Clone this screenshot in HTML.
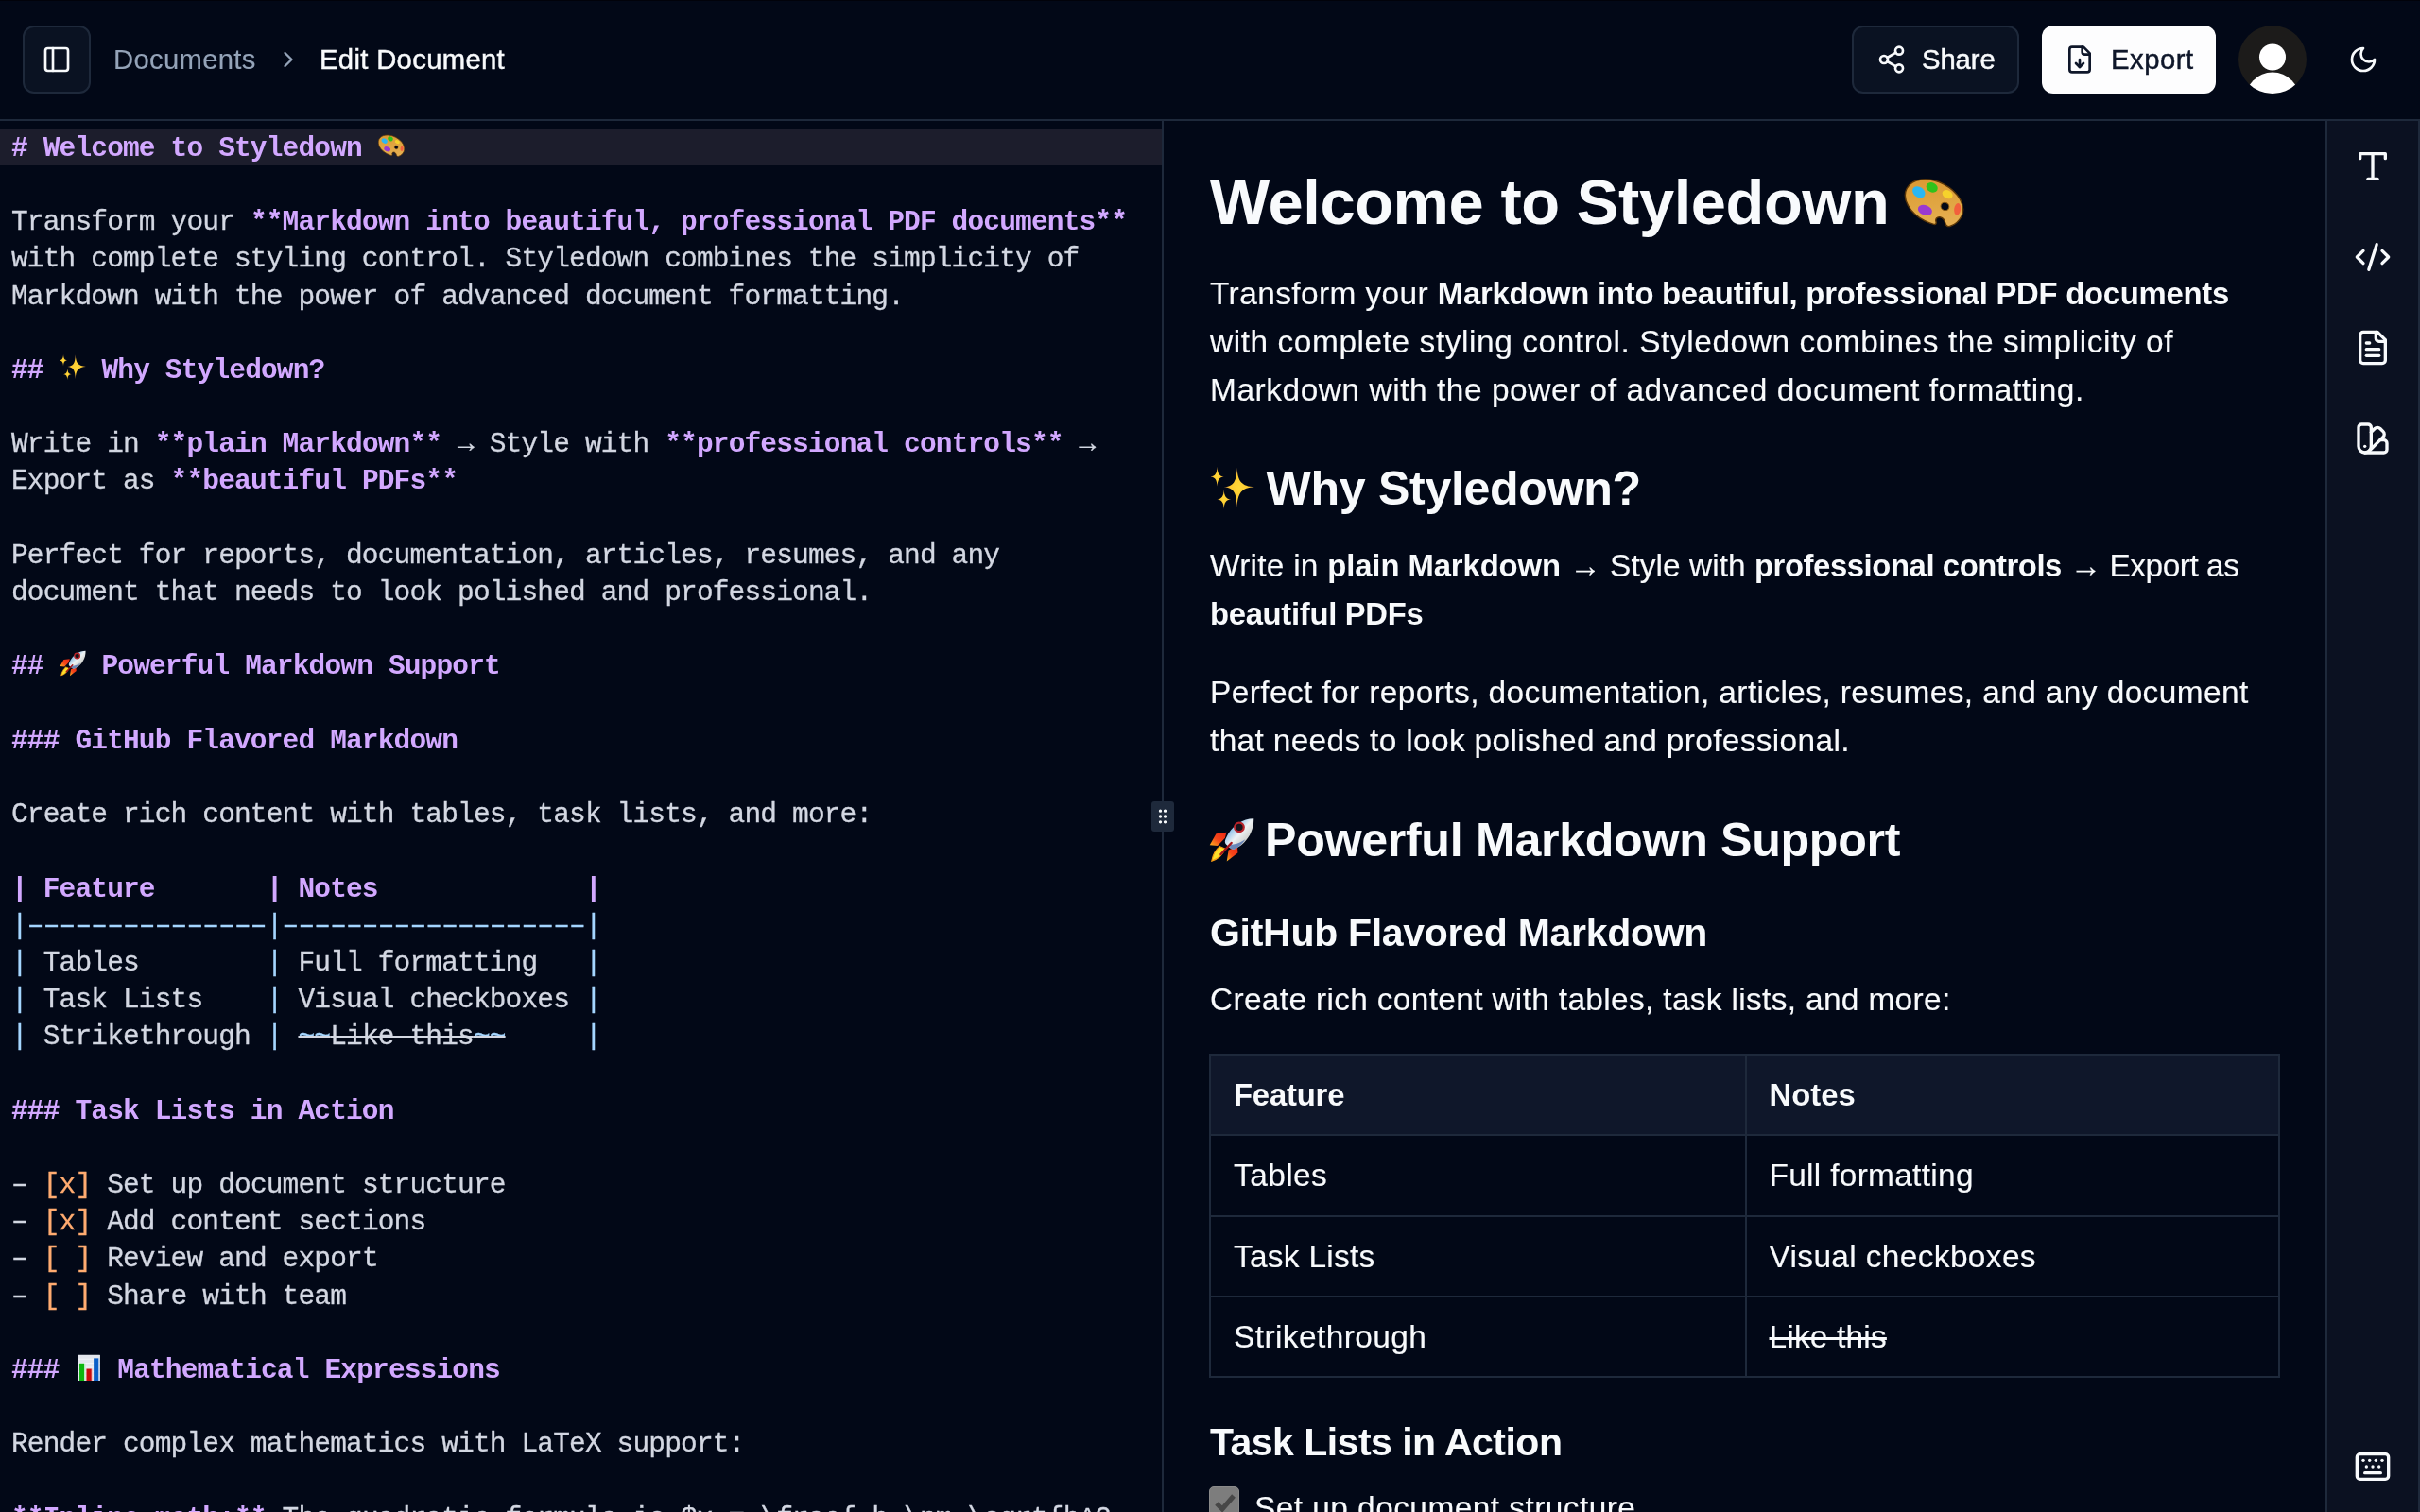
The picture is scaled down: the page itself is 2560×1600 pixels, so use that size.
<!DOCTYPE html>
<html lang="en">
<head>
<meta charset="utf-8">
<title>Edit Document</title>
<style>
*{box-sizing:border-box;margin:0;padding:0}
html,body{width:2560px;height:1600px;overflow:hidden;background:#020817}
body{position:relative;font-family:"Liberation Sans",sans-serif;color:#f8fafc}
svg{display:block}
.ic{fill:none;stroke:currentColor;stroke-width:2;stroke-linecap:round;stroke-linejoin:round}
.f{white-space:pre}
#hdr,#ed,#pv{will-change:transform}
/* header */
#hdr{position:absolute;left:0;top:0;width:2560px;height:128px;border-bottom:2px solid #1e293b;background:#020817;box-shadow:inset 0 1px 0 #01020a}
.btn{position:absolute;top:27px;height:72px;border-radius:12px}
#tog{left:24px;width:72px;border:2px solid #1e293b;background:#0a1222}
#tog svg{position:absolute;left:18px;top:18px}
.crumb{position:absolute;top:43px;height:40px;line-height:40px;white-space:nowrap}
#c1{left:120px;color:#94a3b8}
#c2{left:338px;color:#f8fafc}
#chev{position:absolute;left:291px;top:49px;color:#94a3b8}
#share{left:1959px;width:177px;border:2px solid #1e293b;background:#0a1222}
#share svg{position:absolute;left:24px;top:18px}
#share .t{position:absolute;left:72px;top:14px;line-height:40px;white-space:nowrap}
#export{left:2160px;width:184px;background:#fdfdfe;color:#0f172a}
#export svg{position:absolute;left:24px;top:20px}
#export .t{position:absolute;left:73px;top:16px;line-height:40px;white-space:nowrap}
#avatar{position:absolute;left:2368px;top:27px;width:72px;height:72px;border-radius:50%;background:#1c1b1a;overflow:hidden}
#moon{position:absolute;left:2484px;top:47px;color:#f8fafc}
/* sidebar */
#sb{position:absolute;left:2460px;top:128px;width:100px;height:1472px;background:#0b1121;border-left:2px solid #1e293b;border-right:2px solid #1e293b}
#sb svg{position:absolute;left:28px;color:#f8fafc}
/* divider */
#div{position:absolute;left:1229px;top:128px;width:2px;height:1472px;background:#1e293b}
#grip{position:absolute;left:1218px;top:848px;width:24px;height:32px;border-radius:3px;background:#1e293b}
#grip svg{position:absolute;left:2px;top:6px}
/* editor */
#ed{position:absolute;left:0;top:128px;width:1229px;height:1472px;overflow:hidden;padding-top:8px;font-family:"Liberation Mono",monospace;font-size:29.5px;letter-spacing:-0.845px;color:#d3d7e2;-webkit-text-stroke:0.3px #d3d7e2}
.l{height:39.2px;line-height:39.2px;padding-left:12px;white-space:pre;position:relative}
.l.act{background:#1c1d2c}
#ed .l{padding-top:1.8px}
.h,.s{color:#d2a8ff;font-weight:700;-webkit-text-stroke:0}
.m{color:#a5d6ff;-webkit-text-stroke:0.3px #a5d6ff}
.a{color:#ffab70;-webkit-text-stroke:0.3px #ffab70}
.st{text-decoration:line-through;text-decoration-thickness:2px}
.ee{display:inline-block;width:28px;height:28px;vertical-align:-3px;letter-spacing:0}
/* preview */
#pv{position:absolute;left:1231px;top:128px;width:1229px;height:1472px;overflow:hidden;color:#f8fafc}
#pv>div{position:absolute;left:49px;white-space:pre}
#pv>#tbl,#pv>#cb{left:48px}
.rg{-webkit-text-stroke:0.15px currentColor}
.md{-webkit-text-stroke:0.45px currentColor}
.h1{height:76.8px;line-height:76.8px}
.h2{height:62.4px;line-height:62.4px}
.h3{height:52px;line-height:52px}
.p{height:51.2px;line-height:51.2px}
#tbl{width:1133px;border:2px solid #1e293b;border-bottom:0}
.tr{display:flex;height:85.2px;border-bottom:2px solid #1e293b}
.tr.th{background:#0f172a}
.td{width:50%;padding:16px 24px;line-height:51.2px;height:83.2px}
.td+.td{border-left:2px solid #1e293b}
.strike{text-decoration:line-through;text-decoration-thickness:3px}
#cb{top:1445px;width:32px;height:32px;border-radius:5px;background:#7d7d7d;border:1px solid #8a8a8a}
.em{position:absolute}
</style>
<script>(function(){var w=window.innerWidth||2560;if(w>0&&Math.abs(w-2560)>8){document.documentElement.style.zoom=w/2560;}})();</script>
</head>
<body>
<svg width="0" height="0" style="position:absolute">
<defs>
<radialGradient id="g-star" cx="50%" cy="50%" r="50%"><stop offset="0" stop-color="#ffd83a"/><stop offset=".6" stop-color="#fdc92f"/><stop offset="1" stop-color="#f4a75c"/></radialGradient>
<linearGradient id="g-wood" x1="0" y1="0" x2="1" y2="1"><stop offset="0" stop-color="#d9952f"/><stop offset=".5" stop-color="#e0a541"/><stop offset="1" stop-color="#e8b45a"/></linearGradient>
<linearGradient id="g-rb" x1="0" y1="0" x2="1" y2="1"><stop offset="0" stop-color="#4f97d8"/><stop offset=".28" stop-color="#8fc0e6"/><stop offset=".5" stop-color="#eef2f4"/><stop offset="1" stop-color="#a9a79c"/></linearGradient>
<linearGradient id="g-fl" x1="1" y1="0" x2="0" y2="1"><stop offset="0" stop-color="#ee2712"/><stop offset=".55" stop-color="#f5471a"/><stop offset="1" stop-color="#ffb81f"/></linearGradient>
<symbol id="e-pal" viewBox="0 0 64 64" overflow="visible">
 <g transform="rotate(27 32 32)">
  <path d="M32 9.5C13.5 9.5-1.5 19.5-1.5 32S13.5 54.5 32 54.5c4 0 7.5-.4 10.5-1.1 2.2-.5 2.2-2.3 .9-3.6-2.1-2.1-1.5-5.2 1.4-6.3 3.1-1.2 6.2 .7 8.600000000000001 3.4 1.6 1.8 3.9 2.2 5.7 .5C63.3 43.4 65.5 38 65.5 32c0-12.5-15-22.5-33.5-22.5Z" fill="url(#g-wood)" stroke="#5a3608" stroke-width="1.5"/>
  <ellipse cx="44.5" cy="30.5" rx="4.6" ry="4.2" fill="#020817" stroke="#8a5a14" stroke-width="1"/>
  <ellipse cx="12" cy="29.5" rx="7.5" ry="5.6" fill="#2bb7f3" transform="rotate(8 12 29.5)"/>
  <ellipse cx="22.5" cy="18.5" rx="6.5" ry="5.2" fill="#2fc21b"/>
  <ellipse cx="41" cy="17.500000000000004" rx="6" ry="4.3" fill="#f6d22c"/>
  <ellipse cx="58" cy="27" rx="3.6" ry="6.5" fill="#f2603c" transform="rotate(-20 58 27)"/>
  <ellipse cx="27" cy="44" rx="8" ry="5.5" fill="#9a39d0" transform="rotate(-6 27 44)"/>
 </g>
</symbol>
<symbol id="e-spk" viewBox="0 0 64 64" overflow="visible">
 <path d="M38.4 0.6C39.2 21.8 45.6 28.7 64.9 29.6C45.6 30.5 39.2 37.8 38.4 60.1C37.8 37.8 33.1 30.5 18.9 29.6C33.1 28.7 37.8 21.8 38.4 0.6Z" fill="url(#g-star)"/>
 <path d="M9.2 -0.5C9.6 10.0 12.2 13.9 19.2 14.5C12.2 15.1 9.6 18.9 9.2 29.0C8.8 18.9 6.2 15.1 -0.8 14.5C6.2 13.9 8.8 10.0 9.2 -0.5Z" fill="url(#g-star)"/>
 <path d="M19.1 33.5C19.5 43.6 22.2 47.4 29.3 48.0C22.2 48.6 19.5 52.4 19.1 62.5C18.7 52.4 16.0 48.6 8.9 48.0C16.0 47.4 18.7 43.6 19.1 33.5Z" fill="url(#g-star)"/>
</symbol>
<symbol id="e-rkt" viewBox="0 0 64 64">
 <path d="M1 39 10 23l14.5-2-2 8L12 40Z" fill="url(#g-fl)"/>
 <path d="M25 62 27.500000000000004 46l12.5-5.5.5 9.5Z" fill="url(#g-fl)"/>
 <path d="M3.8 61.5C5.5 52 9.5 45.5 15 41l7.5 3C19.5 52 13 58.5 3.8 61.5Z" fill="#fde02a" stroke="#f59a14" stroke-width="1.6"/>
 <path d="M63 1.5C48 1.5 31.5 11 23.5 30c-1.5 3.5-1.5 6 .5 8.000000000000002l5.5 5c2.500000000000001 2 5 2.500000000000001 8.000000000000002 1C54 36 63.500000000000014 19 63 1.5Z" fill="url(#g-rb)"/>
 <path d="M29.5 43c2.500000000000001 2 5 2.500000000000001 8.000000000000002 1C43.5 40.5 48 36 51 31 45 35.5 38 38 29.5 38.5Z" fill="#4d6fae" opacity=".8"/>
 <circle cx="42.6" cy="13.8" r="6.4" fill="#15131c" stroke="#b8232a" stroke-width="3"/>
 <path d="M31.5 36 16.5 52" stroke="#a8141a" stroke-width="3.2" stroke-linecap="round"/>
</symbol>
<symbol id="e-bar" viewBox="0 0 64 64" overflow="visible">
 <rect x="8.2" y="1.5" width="53.4" height="62.9" rx="1" fill="#e4e7ee"/>
 <path d="M8.2 12h53M8.2 22h53M8.2 32h53M8.2 42h53M8.2 52h53" stroke="#f4f6fa" stroke-width="2"/>
 <rect x="11.5" y="22.3" width="11.4" height="42.1" fill="#0db70f"/><rect x="22.9" y="22.3" width="3" height="42.1" fill="#b7ecbf"/>
 <rect x="28.5" y="35.5" width="12.3" height="28.9" fill="#cb0b0b"/><rect x="40.8" y="35.5" width="3" height="28.9" fill="#f0c4c4"/>
 <rect x="46" y="10" width="11.4" height="54.4" fill="#0b5fc8"/><rect x="57.4" y="10" width="3" height="54.4" fill="#9dbce6"/>
</symbol>
</defs>
</svg>
<div id="hdr">
  <div class="btn" id="tog"><svg class="ic" width="32" height="32" viewBox="0 0 24 24"><rect width="18" height="18" x="3" y="3" rx="2"/><path d="M9 3v18"/></svg></div>
  <div class="crumb" id="c1"><span class="f rg" style="font-size:29.26px;letter-spacing:0.297px;">Documents</span></div>
  <svg id="chev" class="ic" width="28" height="28" viewBox="0 0 24 24"><path d="m9 18 6-6-6-6"/></svg>
  <div class="crumb" id="c2"><span class="f md" style="font-size:29.26px;font-weight:400;letter-spacing:0.325px;">Edit Document</span></div>
  <div class="btn" id="share"><svg class="ic" width="32" height="32" viewBox="0 0 24 24"><circle cx="18" cy="5" r="3"/><circle cx="6" cy="12" r="3"/><circle cx="18" cy="19" r="3"/><line x1="8.59" x2="15.42" y1="13.51" y2="17.49"/><line x1="15.41" x2="8.59" y1="6.51" y2="10.49"/></svg><span class="t"><span class="f md" style="font-size:29.26px;font-weight:400;letter-spacing:-0.097px;">Share</span></span></div>
  <div class="btn" id="export"><svg class="ic" width="32" height="32" viewBox="0 0 24 24"><path d="M15 2H6a2 2 0 0 0-2 2v16a2 2 0 0 0 2 2h12a2 2 0 0 0 2-2V7Z"/><path d="M14 2v4a2 2 0 0 0 2 2h4"/><path d="M12 18v-6"/><path d="m9 15 3 3 3-3"/></svg><span class="t"><span class="f md" style="font-size:29.26px;font-weight:400;letter-spacing:0.500px;">Export</span></span></div>
  <div id="avatar"><svg width="72" height="72" viewBox="0 0 72 72"><circle cx="36" cy="33.5" r="14" fill="#fff"/><ellipse cx="36" cy="79" rx="29" ry="29.5" fill="#fff"/></svg></div>
  <svg id="moon" class="ic" width="32" height="32" viewBox="0 0 24 24"><path d="M12 3a6 6 0 0 0 9 9 9 9 0 1 1-9-9Z"/></svg>
</div>

<div id="ed">
<div class="l act"><span class="h"># Welcome to Styledown </span><span class="ee"><svg width="28" height="28" viewBox="0 0 64 64"><use href="#e-pal"/></svg></span></div>
<div class="l">&nbsp;</div>
<div class="l">Transform your <span class="s">**Markdown into beautiful, professional PDF documents**</span></div>
<div class="l">with complete styling control. Styledown combines the simplicity of</div>
<div class="l">Markdown with the power of advanced document formatting.</div>
<div class="l">&nbsp;</div>
<div class="l"><span class="h">## </span><span class="ee"><svg width="28" height="28" viewBox="0 0 64 64"><use href="#e-spk"/></svg></span><span class="h"> Why Styledown?</span></div>
<div class="l">&nbsp;</div>
<div class="l">Write in <span class="s">**plain Markdown**</span> → Style with <span class="s">**professional controls**</span> →</div>
<div class="l">Export as <span class="s">**beautiful PDFs**</span></div>
<div class="l">&nbsp;</div>
<div class="l">Perfect for reports, documentation, articles, resumes, and any</div>
<div class="l">document that needs to look polished and professional.</div>
<div class="l">&nbsp;</div>
<div class="l"><span class="h">## </span><span class="ee"><svg width="28" height="28" viewBox="0 0 64 64"><use href="#e-rkt"/></svg></span><span class="h"> Powerful Markdown Support</span></div>
<div class="l">&nbsp;</div>
<div class="l"><span class="h">### GitHub Flavored Markdown</span></div>
<div class="l">&nbsp;</div>
<div class="l">Create rich content with tables, task lists, and more:</div>
<div class="l">&nbsp;</div>
<div class="l"><span class="h">| Feature       | Notes             |</span></div>
<div class="l"><span class="m">|–––––––––––––––|–––––––––––––––––––|</span></div>
<div class="l"><span class="m">|</span> Tables        <span class="m">|</span> Full formatting   <span class="m">|</span></div>
<div class="l"><span class="m">|</span> Task Lists    <span class="m">|</span> Visual checkboxes <span class="m">|</span></div>
<div class="l"><span class="m">|</span> Strikethrough <span class="m">|</span> <span class="st"><span class="m">~~</span>Like this<span class="m">~~</span></span>     <span class="m">|</span></div>
<div class="l">&nbsp;</div>
<div class="l"><span class="h">### Task Lists in Action</span></div>
<div class="l">&nbsp;</div>
<div class="l">– <span class="a">[x]</span> Set up document structure</div>
<div class="l">– <span class="a">[x]</span> Add content sections</div>
<div class="l">– <span class="a">[ ]</span> Review and export</div>
<div class="l">– <span class="a">[ ]</span> Share with team</div>
<div class="l">&nbsp;</div>
<div class="l"><span class="h">### </span><span class="ee"><svg width="28" height="28" viewBox="0 0 64 64"><use href="#e-bar"/></svg></span><span class="h"> Mathematical Expressions</span></div>
<div class="l">&nbsp;</div>
<div class="l">Render complex mathematics with LaTeX support:</div>
<div class="l">&nbsp;</div>
<div class="l"><span class="s">**Inline math:**</span> The quadratic formula is $x = \frac{-b \pm \sqrt{b^2</div>
</div>
<div id="div"></div>
<div id="grip"><svg class="ic" width="20" height="20" viewBox="0 0 24 24" style="color:#f8fafc"><circle cx="9" cy="12" r="1"/><circle cx="9" cy="5" r="1"/><circle cx="9" cy="19" r="1"/><circle cx="15" cy="12" r="1"/><circle cx="15" cy="5" r="1"/><circle cx="15" cy="19" r="1"/></svg></div>
<div id="pv">
<div class="h1" style="top:48.0px;"><span class="f" style="font-size:66.88px;font-weight:700;letter-spacing:-0.427px;">Welcome to Styledown</span></div>
<div class="p" style="top:156.8px;"><span class="f rg" style="font-size:33.44px;letter-spacing:0.415px;">Transform your </span><span class="f" style="font-size:32.80px;font-weight:700;letter-spacing:-0.236px;">Markdown into beautiful, professional PDF documents</span></div>
<div class="p" style="top:208.0px;"><span class="f rg" style="font-size:33.44px;letter-spacing:0.571px;">with complete styling control. Styledown combines the simplicity of</span></div>
<div class="p" style="top:259.2px;"><span class="f rg" style="font-size:33.44px;letter-spacing:0.557px;">Markdown with the power of advanced document formatting.</span></div>
<div class="h2" style="top:358.4px;left:108.5px;"><span class="f" style="font-size:50.16px;font-weight:700;letter-spacing:-0.346px;">Why Styledown?</span></div>
<div class="p" style="top:444.8px;"><span class="f rg" style="font-size:33.44px;letter-spacing:0.250px;">Write in </span><span class="f" style="font-size:32.80px;font-weight:700;letter-spacing:-0.078px;">plain Markdown</span><span class="f rg" style="font-size:33.44px;letter-spacing:0.049px;"> → Style with </span><span class="f" style="font-size:32.80px;font-weight:700;letter-spacing:-0.405px;">professional controls</span><span class="f rg" style="font-size:33.44px;letter-spacing:-0.473px;"> → Export as</span></div>
<div class="p" style="top:496.0px;"><span class="f" style="font-size:32.80px;font-weight:700;letter-spacing:-0.297px;">beautiful PDFs</span></div>
<div class="p" style="top:579.2px;"><span class="f rg" style="font-size:33.44px;letter-spacing:0.403px;">Perfect for reports, documentation, articles, resumes, and any document</span></div>
<div class="p" style="top:630.4px;"><span class="f rg" style="font-size:33.44px;letter-spacing:0.340px;">that needs to look polished and professional.</span></div>
<div class="h2" style="top:729.6px;left:107.0px;"><span class="f" style="font-size:50.16px;font-weight:700;letter-spacing:-0.311px;">Powerful Markdown Support</span></div>
<div class="h3" style="top:833.0px;"><span class="f" style="font-size:41.00px;font-weight:700;letter-spacing:-0.291px;">GitHub Flavored Markdown</span></div>
<div class="p" style="top:904.0px;"><span class="f rg" style="font-size:33.44px;letter-spacing:0.337px;">Create rich content with tables, task lists, and more:</span></div>
<div id="tbl" style="top:987.2px"><div class="tr th"><div class="td"><span class="f" style="font-size:32.80px;font-weight:700;letter-spacing:-0.183px;">Feature</span></div><div class="td"><span class="f" style="font-size:32.80px;font-weight:700;letter-spacing:0.028px;">Notes</span></div></div><div class="tr"><div class="td"><span class="f rg" style="font-size:33.44px;letter-spacing:0.427px;">Tables</span></div><div class="td"><span class="f rg" style="font-size:33.44px;letter-spacing:0.304px;">Full formatting</span></div></div><div class="tr"><div class="td"><span class="f rg" style="font-size:33.44px;letter-spacing:0.278px;">Task Lists</span></div><div class="td"><span class="f rg" style="font-size:33.44px;letter-spacing:0.365px;">Visual checkboxes</span></div></div><div class="tr"><div class="td"><span class="f rg" style="font-size:33.44px;letter-spacing:0.428px;">Strikethrough</span></div><div class="td"><span class="f strike rg" style="font-size:33.44px;letter-spacing:0.196px;">Like this</span></div></div></div>
<div class="h3" style="top:1372.0px;"><span class="f" style="font-size:41.00px;font-weight:700;letter-spacing:-0.516px;">Task Lists in Action</span></div>
<div class="p" style="top:1442.4px;left:96px;"><span class="f rg" style="font-size:33.44px;letter-spacing:0.456px;">Set up document structure</span></div>
<div id="cb"><svg width="32" height="32" viewBox="0 0 32 32"><path d="M7 17l6 6L25 9" fill="none" stroke="#474747" stroke-width="5"/></svg></div>
<svg class="em" style="left:783px;top:61px" width="64" height="52.4" viewBox="-1 6 66 54"><use href="#e-pal" width="64" height="64"/></svg>
<svg class="em" style="left:50px;top:366px" width="46" height="46" viewBox="0 0 64 64"><use href="#e-spk"/></svg>
<svg class="em" style="left:48px;top:737px" width="48" height="48" viewBox="0 0 64 64"><use href="#e-rkt"/></svg>
</div>

<div id="sb">
  <svg class="ic" width="40" height="40" viewBox="0 0 24 24" style="top:28px"><polyline points="4 7 4 4 20 4 20 7"/><line x1="9" x2="15" y1="20" y2="20"/><line x1="12" x2="12" y1="4" y2="20"/></svg>
  <svg class="ic" width="40" height="40" viewBox="0 0 24 24" style="top:124px"><path d="m18 16 4-4-4-4"/><path d="m6 8-4 4 4 4"/><path d="m14.5 4-5 16"/></svg>
  <svg class="ic" width="40" height="40" viewBox="0 0 24 24" style="top:220px"><path d="M15 2H6a2 2 0 0 0-2 2v16a2 2 0 0 0 2 2h12a2 2 0 0 0 2-2V7Z"/><path d="M14 2v4a2 2 0 0 0 2 2h4"/><path d="M10 9H8"/><path d="M16 13H8"/><path d="M16 17H8"/></svg>
  <svg class="ic" width="40" height="40" viewBox="0 0 24 24" style="top:316px"><path d="M11 17a4 4 0 0 1-8 0V5a2 2 0 0 1 2-2h4a2 2 0 0 1 2 2Z"/><path d="M16.7 13H19a2 2 0 0 1 2 2v4a2 2 0 0 1-2 2H7"/><path d="M 7 17h.01"/><path d="m11 8 2.3-2.3a2.4 2.4 0 0 1 3.404.004L18.6 7.6a2.4 2.4 0 0 1 .026 3.434L9.9 19.8"/></svg>
  <svg class="ic" width="40" height="40" viewBox="0 0 24 24" style="top:1404px"><path d="M10 8h.01"/><path d="M12 12h.01"/><path d="M14 8h.01"/><path d="M16 12h.01"/><path d="M18 8h.01"/><path d="M6 8h.01"/><path d="M7 16h10"/><path d="M8 12h.01"/><rect width="20" height="16" x="2" y="4" rx="2"/></svg>
</div>
</body>
</html>
